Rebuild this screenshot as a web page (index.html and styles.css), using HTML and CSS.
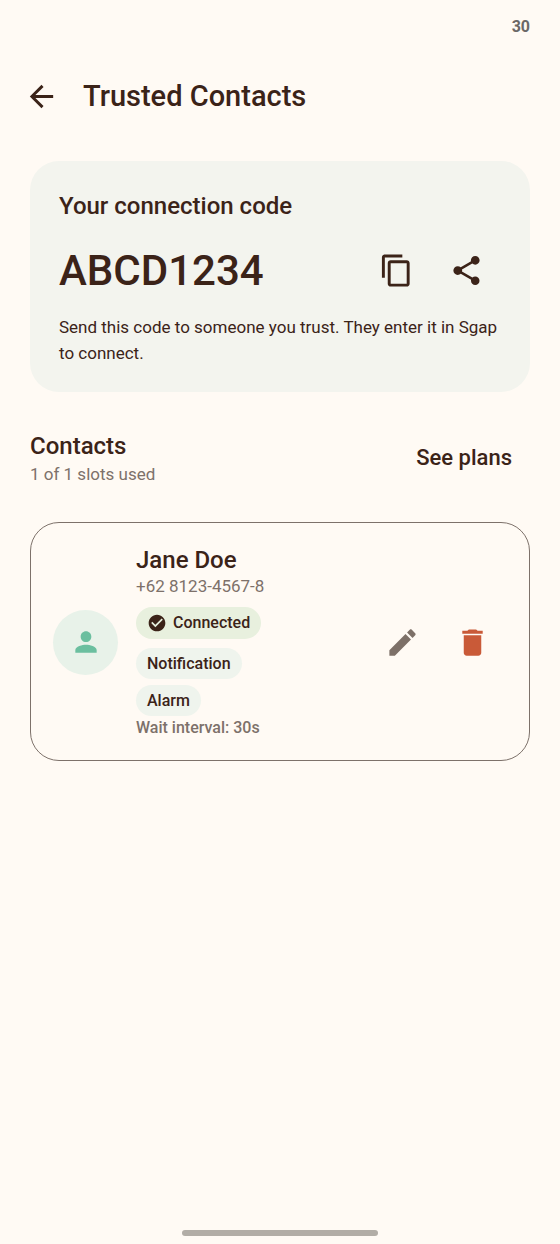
FILE: index.html
```html
<!DOCTYPE html>
<html lang="en">
<head>
<meta charset="utf-8">
<meta name="viewport" content="width=device-width, initial-scale=1">
<title>Trusted Contacts</title>
<link rel="stylesheet" href="styles.css">
</head>
<body>
<div class="screen">
  <div class="status-bar"><span class="battery">30</span></div>
  <header class="app-bar">
    <button class="back" type="button" aria-label="Back">
      <svg class="icon" viewBox="0 0 24 24"><path d="M20 11H7.83l5.59-5.59L12 4l-8 8 8 8 1.41-1.41L7.83 13H20v-2z"/></svg>
    </button>
    <h1 class="page-title">Trusted Contacts</h1>
  </header>
  <main class="content">
    <section class="code-card">
      <h2 class="heading">Your connection code</h2>
      <div class="code-row">
        <span class="code">ABCD1234</span>
        <div class="actions">
          <button class="icon-button" type="button" aria-label="Copy code">
            <svg class="icon" viewBox="0 0 24 24"><path d="M16 1H4c-1.1 0-2 .9-2 2v14h2V3h12V1zm3 4H8c-1.1 0-2 .9-2 2v14c0 1.1.9 2 2 2h11c1.1 0 2-.9 2-2V7c0-1.1-.9-2-2-2zm0 16H8V7h11v14z"/></svg>
          </button>
          <button class="icon-button" type="button" aria-label="Share code">
            <svg class="icon" viewBox="0 0 24 24"><path d="M18 16.08c-.76 0-1.44.3-1.96.77L8.91 12.7c.05-.23.09-.46.09-.7s-.04-.47-.09-.7l7.05-4.11c.54.5 1.25.81 2.04.81 1.66 0 3-1.34 3-3s-1.34-3-3-3-3 1.34-3 3c0 .24.04.47.09.7L8.04 9.81C7.5 9.31 6.79 9 6 9c-1.66 0-3 1.34-3 3s1.34 3 3 3c.79 0 1.5-.31 2.04-.81l7.12 4.16c-.05.21-.08.43-.08.65 0 1.61 1.31 2.92 2.92 2.92s2.92-1.31 2.92-2.92-1.31-2.92-2.92-2.92z"/></svg>
          </button>
        </div>
      </div>
      <p class="hint">Send this code to someone you trust. They enter it in Sgap to connect.</p>
    </section>

    <section class="contacts">
      <div class="contacts-head">
        <div>
          <h2 class="heading">Contacts</h2>
          <p class="muted">1 of 1 slots used</p>
        </div>
        <button class="text-button" type="button">See plans</button>
      </div>
      <article class="contact">
        <div class="avatar">
          <svg class="icon" viewBox="0 0 24 24"><path d="M12 12c2.21 0 4-1.79 4-4s-1.79-4-4-4-4 1.79-4 4 1.79 4 4 4zm0 2c-2.67 0-8 1.34-8 4v2h16v-2c0-2.66-5.33-4-8-4z"/></svg>
        </div>
        <div class="details">
          <h3 class="heading">Jane Doe</h3>
          <p class="muted phone">+62 8123-4567-8</p>
          <div class="chips">
            <span class="chip chip-status">
              <svg class="chip-icon" viewBox="0 0 24 24"><path d="M12 2C6.48 2 2 6.48 2 12s4.48 10 10 10 10-4.48 10-10S17.52 2 12 2zm-2 15l-5-5 1.41-1.41L10 14.17l7.59-7.59L19 8l-9 9z"/></svg>
              Connected
            </span>
            <span class="chip">Notification</span>
            <span class="chip">Alarm</span>
          </div>
          <p class="interval">Wait interval: 30s</p>
        </div>
        <div class="actions">
          <button class="icon-button edit" type="button" aria-label="Edit contact">
            <svg class="icon" viewBox="0 0 24 24"><path d="M3 17.25V21h3.75L17.81 9.94l-3.75-3.75L3 17.25zM20.71 7.04c.39-.39.39-1.02 0-1.41l-2.34-2.34c-.39-.39-1.02-.39-1.41 0l-1.83 1.83 3.75 3.75 1.83-1.83z"/></svg>
          </button>
          <button class="icon-button delete" type="button" aria-label="Delete contact">
            <svg class="icon" viewBox="0 0 24 24"><path d="M6 19c0 1.1.9 2 2 2h8c1.1 0 2-.9 2-2V7H6v12zM19 4h-3.5l-1-1h-5l-1 1H5v2h14V4z"/></svg>
          </button>
        </div>
      </article>
    </section>
  </main>
  <div class="home-bar"></div>
</div>
</body>
</html>
```
FILE: styles.css
```css
* {
  box-sizing: border-box;
}

body {
  margin: 0;
  background: #fffaf4;
  color: #3b2318;
  font-family: Roboto, "Liberation Sans", sans-serif;
}

h1, h2, h3, p {
  margin: 0;
  font-weight: 500;
}

button {
  padding: 0;
  border: 0;
  background: none;
  color: inherit;
  font: inherit;
  cursor: pointer;
}

.screen {
  display: flex;
  flex-direction: column;
  min-height: 100vh;
}

.status-bar {
  display: flex;
  justify-content: flex-end;
  padding: 17px 30px 0;
}

.battery {
  color: #6b6867;
  font-size: 16px;
  font-weight: 700;
  line-height: 20px;
}

.app-bar {
  display: flex;
  align-items: center;
  gap: 24px;
  padding: 41px 24px 47px;
}

.back {
  display: flex;
}

.icon {
  width: 35px;
  height: 35px;
  fill: currentColor;
}

.page-title {
  font-size: 29px;
  line-height: 36px;
}

.content {
  flex: 1;
  padding: 0 30px;
}

.code-card {
  padding: 29px 29px 26px;
  border-radius: 29px;
  background: #f3f4ee;
}

.heading {
  font-size: 24px;
  line-height: 32px;
}

.code-row {
  display: flex;
  align-items: center;
  justify-content: space-between;
  margin: 13px 0 9px;
}

.code {
  padding-top: 2px;
  font-size: 42px;
  font-weight: 500;
  line-height: 52px;
}

.actions {
  display: flex;
}

.icon-button {
  display: flex;
  align-items: center;
  justify-content: center;
  width: 70px;
  height: 70px;
}

.hint {
  font-size: 17px;
  font-weight: 400;
  line-height: 26px;
}

.contacts-head {
  display: flex;
  align-items: center;
  justify-content: space-between;
  padding: 38px 0 36px;
}

.muted {
  color: #7d716a;
  font-size: 17px;
  font-weight: 400;
  line-height: 24px;
}

.text-button {
  padding: 0 18px;
  font-size: 22px;
  font-weight: 500;
  line-height: 32px;
}

.contact {
  display: flex;
  align-items: center;
  padding: 21px 22px 20px;
  border: 1px solid #7d716a;
  border-radius: 29px;
}

.avatar {
  display: flex;
  flex: none;
  align-items: center;
  justify-content: center;
  width: 65px;
  height: 65px;
  border-radius: 50%;
  background: #e8f2e9;
  color: #6bbf9f;
}

.avatar .icon {
  width: 32px;
  height: 32px;
}

.details {
  flex: 1;
  margin-left: 18px;
}

.phone {
  line-height: 20px;
}

.chips {
  display: flex;
  flex-direction: column;
  align-items: flex-start;
  gap: 6px;
  margin-top: 11px;
}

.chip {
  display: flex;
  align-items: center;
  gap: 6px;
  padding: 4px 11px;
  border-radius: 16px;
  background: #eff4ed;
  font-size: 16px;
  font-weight: 500;
  line-height: 23px;
}

.chip-status {
  margin-bottom: 3px;
  background: #e8f0de;
  line-height: 24px;
}

.chip-icon {
  width: 20px;
  height: 20px;
  fill: currentColor;
}

.interval {
  color: #7d716a;
  font-size: 16px;
  line-height: 24px;
}

.edit {
  color: #7d7068;
}

.delete {
  color: #c95a38;
}

.home-bar {
  align-self: center;
  width: 35%;
  height: 6px;
  margin-bottom: 8px;
  border-radius: 3px;
  background: #b2ada6;
}
```
